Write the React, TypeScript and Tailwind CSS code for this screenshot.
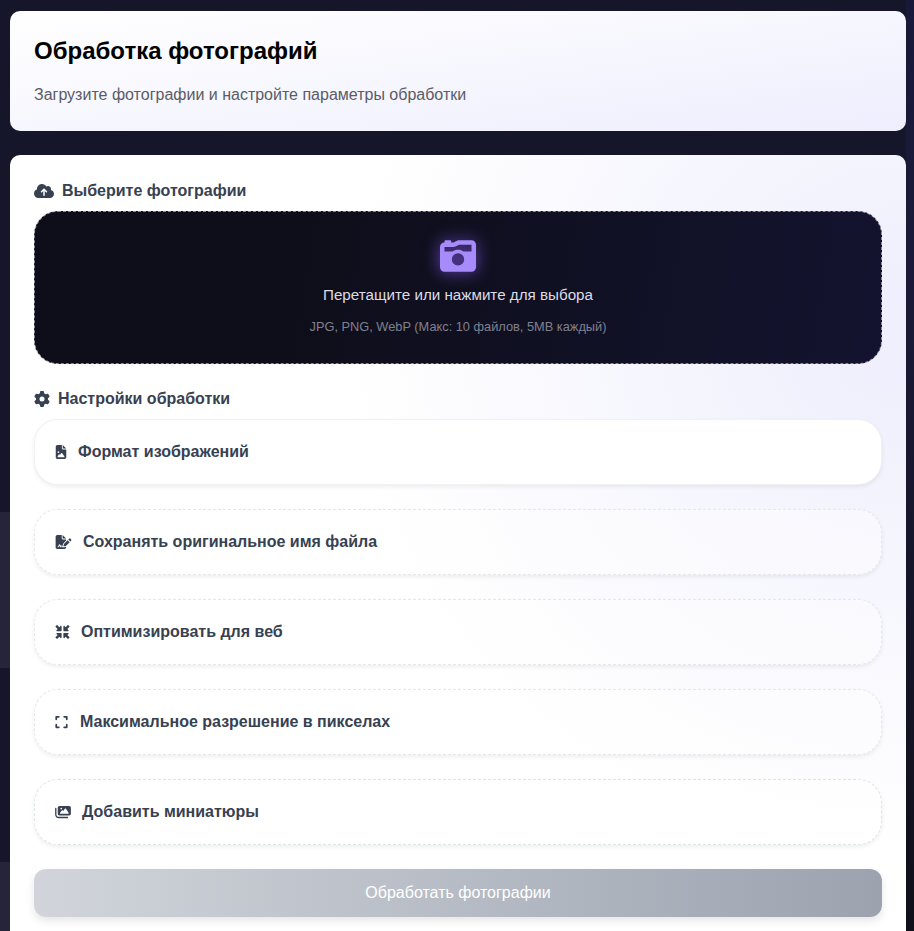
import { FaCloudArrowUp, FaGear, FaFileImage, FaFileSignature, FaMinimize, FaExpand, FaImages, FaCameraRetro } from "react-icons/fa6";
import type { ReactNode } from "react";

const rows: { icon: ReactNode; label: string; style: string }[] = [
  { icon: <FaFileImage className="h-[14px] w-[12px]" />, label: "Формат изображений", style: "gap-[11px] border-solid border-[#f1f1f4] bg-white" },
  { icon: <FaFileSignature className="h-[14px] w-[17px]" />, label: "Сохранять оригинальное имя файла", style: "gap-[11px] border-dashed border-[#e5e7eb] bg-white/40" },
  { icon: <FaMinimize className="h-[14px] w-[15px]" />, label: "Оптимизировать для веб", style: "gap-[11px] border-dashed border-[#e5e7eb] bg-white/40" },
  { icon: <FaExpand className="h-[14px] w-[13px]" />, label: "Максимальное разрешение в пикселах", style: "gap-[12px] border-dashed border-[#e5e7eb] bg-white/40" },
  { icon: <FaImages className="h-[14px] w-[16px]" />, label: "Добавить миниатюры", style: "gap-[11px] border-dashed border-[#dde4e8] bg-white/60" },
];

export default function App() {
  return (
    <div className="relative h-[931px] overflow-hidden bg-[#16162b] px-[10px] pt-[11px] pr-[8px] font-['Liberation_Sans',Arial,sans-serif]">
      <div className="absolute left-0 top-[512px] h-[156px] w-[10px] bg-[#25253a]" />
      <div className="absolute left-0 top-[862px] h-[69px] w-[10px] bg-[#25253a]" />
      <div className="absolute right-0 top-0 h-full w-[8px] bg-gradient-to-b from-[#18183a] via-[#1a1a38] via-30% to-[#10101a]" />
      <div className="relative flex flex-col gap-[24px]">
        <header className="h-[120px] rounded-[10px] bg-gradient-to-br from-white to-[#eeeefe] px-[24px] pt-[24px]">
          <h1 className="text-[24px] font-bold leading-[32px] text-black">Обработка фотографий</h1>
          <p className="mt-[16px] text-[16px] leading-[24px] text-[#5b5b66]">Загрузите фотографии и настройте параметры обработки</p>
        </header>
        <main className="h-[900px] rounded-[10px] bg-[radial-gradient(ellipse_560px_520px_at_100%_180px,#eeeefd,#ffffff)] px-[24px] pt-[25px]">
          <div className="flex h-[22px] items-center gap-[8px] text-[16px] font-bold text-[#374151]">
            <FaCloudArrowUp className="h-[16px] w-[20px]" />
            <span>Выберите фотографии</span>
          </div>
          <div className="mt-[9px] flex h-[153px] flex-col items-center rounded-[24px] border border-dashed border-[#8a8a98] bg-[linear-gradient(100deg,#0e0e1a_30%,#13132f_100%)] pt-[26px]">
            <FaCameraRetro className="h-[36px] w-[36px] text-[#a78bfa] drop-shadow-[0_0_8px_rgba(139,92,246,0.75)]" />
            <p className="mt-[9px] text-[15.2px] leading-[24px] text-[#dcdce4]">Перетащите или нажмите для выбора</p>
            <p className="mt-[10px] text-[12.8px] leading-[20px] text-[#80808f]">JPG, PNG, WebP (Макс: 10 файлов, 5MB каждый)</p>
          </div>
          <div className="mt-[24px] flex h-[22px] items-center gap-[8px] text-[16px] font-bold text-[#374151]">
            <FaGear className="h-[16px] w-[16px]" />
            <span>Настройки обработки</span>
          </div>
          <div className="mt-[9px] flex flex-col gap-[24px]">
            {rows.map((r) => (
              <div key={r.label} className={`flex h-[66px] items-center rounded-[24px] border px-[20px] text-[16px] font-bold text-[#374151] shadow-[0_2px_4px_rgba(0,0,0,0.07)] ${r.style}`}>
                {r.icon}
                <span>{r.label}</span>
              </div>
            ))}
          </div>
          <button className="mt-[24px] h-[48px] w-full rounded-[12px] bg-gradient-to-r from-[#d1d5db] to-[#9ca3af] text-[16px] text-white shadow-[0_4px_8px_rgba(0,0,0,0.1)]">
            Обработать фотографии
          </button>
        </main>
      </div>
    </div>
  );
}
